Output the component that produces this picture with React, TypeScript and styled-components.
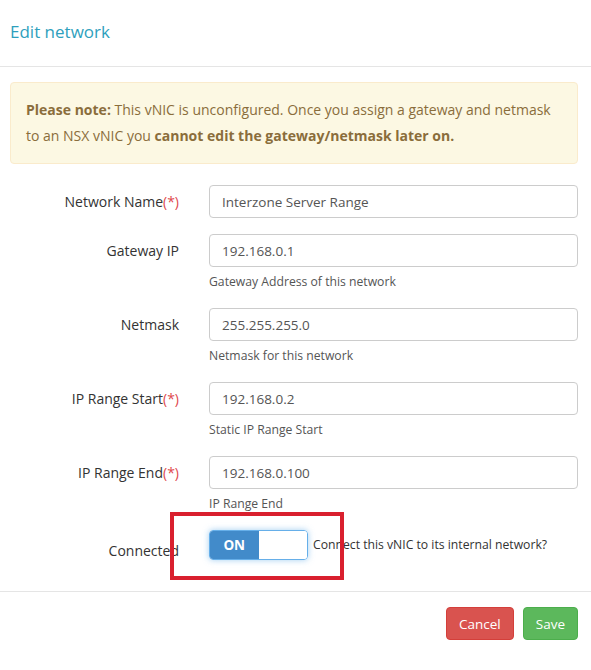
import React from "react";
import styled, { createGlobalStyle } from "styled-components";

const Global = createGlobalStyle`
  html, body { margin: 0; padding: 0; background: #fff; }
  body {
    font-family: "Open Sans", "Noto Sans", "Liberation Sans", sans-serif;
    color: #333;
    font-size: 13.5px;
  }
  * { box-sizing: border-box; }
`;

const Modal = styled.div`
  width: 591px;
  height: 670px;
  background: #fff;
  display: flex;
  flex-direction: column;
`;

const Header = styled.div`
  height: 67px;
  padding: 0 10px;
  display: flex;
  align-items: center;
  border-bottom: 1px solid #e5e5e5;
`;

const Title = styled.h4`
  margin: 0 0 3px;
  font-size: 17px;
  font-weight: 400;
  color: #2e9fbd;
`;

const Body = styled.div`
  padding: 15px 13px 30px 10px;
  border-bottom: 1px solid #e5e5e5;
`;

const Alert = styled.div`
  background: #fcf8e3;
  border: 1px solid #faebcc;
  border-radius: 4px;
  color: #8a6d3b;
  font-size: 14px;
  padding: 14px 15px;
  line-height: 26px;
  margin-bottom: 21px;
`;

const Form = styled.div`
  display: flex;
  flex-direction: column;
  gap: 16px;
`;

const Row = styled.div`
  position: relative;
  display: grid;
  grid-template-columns: 169px 1fr;
  column-gap: 30px;
  align-items: start;
`;

const Label = styled.label<{ $offset?: number }>`
  text-align: right;
  font-size: 14px;
  color: #333;
  line-height: 20px;
  padding-top: ${(p) => p.$offset ?? 7}px;
`;

const Req = styled.span`
  color: #e0484d;
`;

const Field = styled.div`
  display: flex;
  flex-direction: column;
`;

const Input = styled.input`
  height: 33px;
  width: 100%;
  padding: 6px 12px;
  border: 1px solid #ccc;
  border-radius: 4px;
  font: inherit;
  font-size: 13.5px;
  color: #555;
  background: #fff;
  outline: none;
`;

const Help = styled.span`
  margin-top: 5px;
  line-height: 20px;
  font-size: 12.2px;
  color: #555;
`;

const SwitchLine = styled.div`
  display: flex;
  align-items: center;
  gap: 5px;
`;

const Switch = styled.div`
  width: 99px;
  height: 30px;
  display: flex;
  border: 1px solid #66afe9;
  border-radius: 4px;
  overflow: hidden;
  box-shadow: 0 0 6px rgba(102, 175, 233, 0.6);
`;

const SwitchHalf = styled.span<{ $on?: boolean }>`
  flex: 1;
  display: flex;
  align-items: center;
  justify-content: center;
  background: ${(p) => (p.$on ? "#428bca" : "#fff")};
  color: #fff;
  font-weight: 700;
  font-size: 13.5px;
`;

const SwitchText = styled.span`
  font-size: 12.2px;
  color: #333;
  margin-top: -2px;
`;

const Highlight = styled.div`
  position: absolute;
  left: 160px;
  top: -18px;
  width: 174px;
  height: 68px;
  border: 4px solid #d9202e;
  pointer-events: none;
`;

const Footer = styled.div`
  display: flex;
  justify-content: flex-end;
  gap: 9px;
  padding: 15px 13px 0 10px;
`;

const Button = styled.button<{ $variant: "danger" | "success" }>`
  height: 33px;
  padding: 0 12px;
  border-radius: 4px;
  font: inherit;
  font-size: 13.5px;
  color: #fff;
  border: 1px solid
    ${(p) => (p.$variant === "danger" ? "#d43f3a" : "#4cae4c")};
  background: ${(p) => (p.$variant === "danger" ? "#d9534f" : "#5cb85c")};
`;

const fields = [
  { label: "Network Name", req: true, value: "Interzone Server Range" },
  { label: "Gateway IP", value: "192.168.0.1", help: "Gateway Address of this network" },
  { label: "Netmask", value: "255.255.255.0", help: "Netmask for this network" },
  { label: "IP Range Start", req: true, value: "192.168.0.2", help: "Static IP Range Start" },
  { label: "IP Range End", req: true, value: "192.168.0.100", help: "IP Range End" },
];

export default function App() {
  return (
    <Modal>
      <Global />
      <Header>
        <Title>Edit network</Title>
      </Header>
      <Body>
        <Alert>
          <strong>Please note:</strong> This vNIC is unconfigured. Once you assign a
          gateway and netmask to an NSX vNIC you{" "}
          <strong>cannot edit the gateway/netmask later on.</strong>
        </Alert>
        <Form>
          {fields.map((f) => (
            <Row key={f.label}>
              <Label>
                {f.label}
                {f.req && <Req>(*)</Req>}
              </Label>
              <Field>
                <Input defaultValue={f.value} />
                {f.help && <Help>{f.help}</Help>}
              </Field>
            </Row>
          ))}
          <Row>
            <Label $offset={11}>Connected</Label>
            <SwitchLine>
              <Switch>
                <SwitchHalf $on>ON</SwitchHalf>
                <SwitchHalf />
              </Switch>
              <SwitchText>Connect this vNIC to its internal network?</SwitchText>
            </SwitchLine>
            <Highlight />
          </Row>
        </Form>
      </Body>
      <Footer>
        <Button $variant="danger">Cancel</Button>
        <Button $variant="success">Save</Button>
      </Footer>
    </Modal>
  );
}
